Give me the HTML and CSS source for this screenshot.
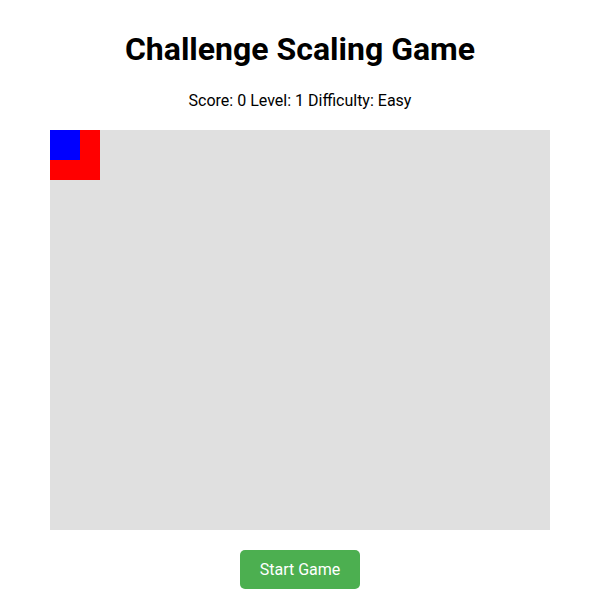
FILE: index.html
```html
<!DOCTYPE html>
<html>
<head>
<title>Challenge Scaling Game</title>
<link rel="stylesheet" href="styles.css">
</head>
<body>

<h1>Challenge Scaling Game</h1>

<div id="stats">
  Score: <span id="score">0</span>
  Level: <span id="level">1</span>
  Difficulty: <span id="difficulty">Easy</span>
</div>

<div id="gameArea">
  <div class="target">
    <div class="player"></div>
  </div>
</div>

<button id="startButton">Start Game</button>

</body>
</html>
```

FILE: styles.css
```css
body {
  font-family: Roboto, "Liberation Sans", sans-serif;
  text-align: center;
  margin: 8px;
  color: #000;
}
h1 {
  font-size: 32px;
  margin: 22px 0 23px;
}
#stats {
  font-size: 16px;
  margin-bottom: 20px;
}
#gameArea {
  width: 500px;
  height: 400px;
  margin: 0 auto;
  background-color: #e0e0e0;
  text-align: left;
}
.target {
  width: 50px;
  height: 50px;
  background-color: red;
}
.player {
  width: 30px;
  height: 30px;
  background-color: blue;
}
#startButton {
  margin-top: 20px;
  padding: 10px 20px;
  font-family: inherit;
  font-size: 16px;
  background-color: #4caf50; /* Green */
  color: white;
  border: none;
  border-radius: 5px;
  cursor: pointer;
}
```
